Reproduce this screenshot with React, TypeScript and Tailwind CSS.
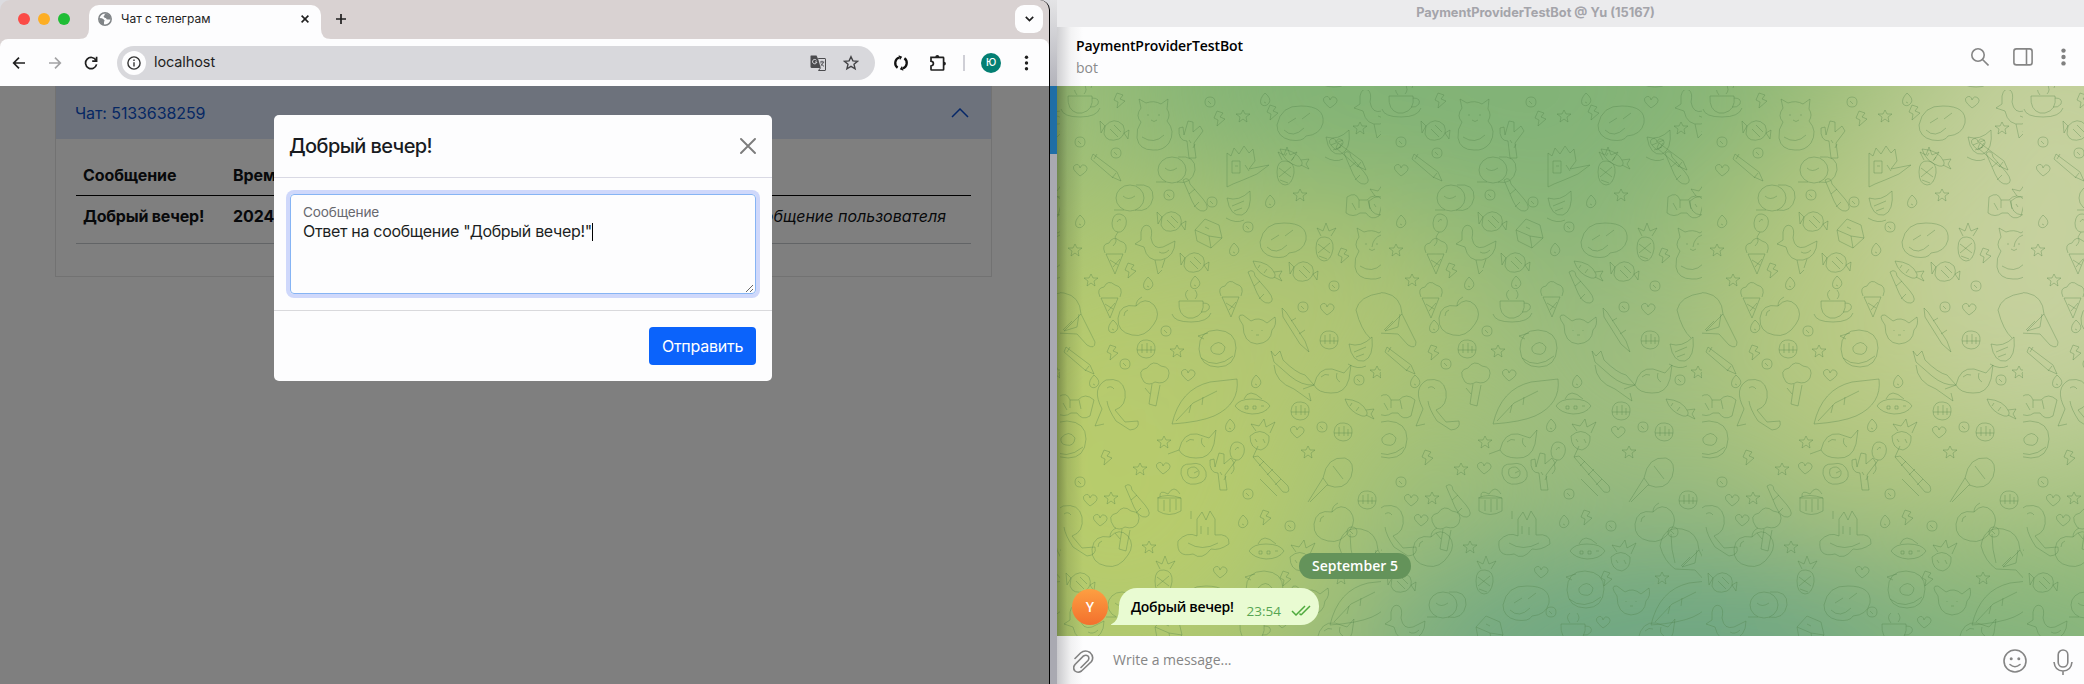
import React from "react";

/* ---------- wallpaper doodles ---------- */

const SHAPES: Record<string, string> = {
  cat: "M-13-12l-2-9 7 4q8-3 15 1l7-5-1 10q4 6 0 12q9 10 2 22q-6 8-16 7q-14 0-16-12q-1-9 4-16q-6-6 0-14M-6-6v2M5-6v2M-3 0q3 3 6 0M-12 17q12 8 22-2",
  castle: "M-14 24v-34l4 3 3-8 5 6 5-8 5 7 4-4 2 12-6 8 20-4-12 9-14 6-10 4zM-9-2v12h8v-12zM-6 3h3M4 2l4 6",
  planet: "M-14 0a14 13 0 1 0 28 0a14 13 0 1 0-28 0M6-13q18-2 17 13q-3 15-18 12M-7-2q5 5 12 0M-16 12h10",
  pencil: "M-14-13l24 18 4 9-9-4-21-18zM-10-13l-3 5M9 6l-4 5",
  melon: "M-11-8q12 4 23-7q2 20-8 24q-12 2-15-17M-6 0l12-5M-4 5l8-3M-12 12q10 6 18 2",
  cube: "M-13-2l10-11 14 6 3 13-11 10-14-7zM-13-2l14 6 13 2M1 4l2 12M-3-5l4 2",
  whale: "M-23 3q4-20 24-19q24 0 22 17q-3 12-17 13q-3 6-16 4q-13-3-13-15M-12 1l8-5M2-3l8-6M-16 8q9 9 20-2",
  pine: "M-8 4q0-12 9-11q9 1 8 12q-2 12-9 12q-8-1-8-13M-3-8l-4-8 6 3 3-8 3 8 7-3-5 8M-6 0l12 9M6-1l-12 10M-5 12l8 3",
  duck: "M-16-14q2-9 8-6q4 3 2 12q2 12 12 9l12-6q0 16-14 19q-14 2-17-13l-9-3 6-4zM2 6q5 3 10-2M-2 14l3 14 4-4M8 13l-3 9",
  candy: "M-9-4q9-10 18-1q4 9-4 14q-12 4-15-5zM-9-4l-5-5 1 12zM10 3l5-3-1 9zM-4-1l8 8M0-5l7 7",
  carrot: "M-13-9q17 1 22 13q1 5-5 4q-13-4-17-17M8 2l8-1-3 5 3 5-8-4M-6-5l-2 3M1-1l-3 4",
  apple: "M0-10q9-10 18-1q7 9 0 19q-9 14-22 11q-15-3-14-17q2-15 18-12M0-10q0-6 6-9M-12 0q0-5 4-6",
  cup: "M-12-6h24q2 14-10 17h-5q-10-3-9-17M12-4q8 0 6 6q-3 4-8 3M-19 7q2 8 19 8q17 0 20-9M-3-7q-5-6 0-10M4-8q4-4 0-9",
  cone: "M-9-2l9 20 8-20zM-10-3q-4-9 4-10q4-8 11-2q9 2 5 12M-5 4l8 5M5 3l-7 8",
  rabbit: "M-14-2q-8-11 0-10l8 6q8-5 16 2l8-6q2 8-3 13q-1 13-15 14q-14-1-14-19M-5 3v1M5 3v1M-1 8h3",
  beam: "M-16-22l4 4 19 29 4 11-9-8-17-27zM-7-9l5-3M1 4l6-4",
  umbrella: "M-23-6q3-20 22-17q16 3 17 21l14 28q0 8-8 3l-10-11-20-1q-11-8-15-23M-12-18q0 16 4 29M16-2l-17 17 13-4 2-13M-2 14l9-9",
  donut: "M-19 0q0-19 18-19q19 1 19 18q-1 19-18 19q-18 0-19-18M-7-2q8-9 14 0q-1 9-9 7q-6-1-5-7M-14-10l-6-3 10-3M-17 9q15 12 32-2",
  banana: "M-22-22l4 5 5-5 3 9q13 13 22 15l9 10q-12 1-24-9l-16-14zM-19-8q1 17 20 24l17 12-2-8",
  fish: "M-16 8q4-18 18-16l12 4 7-8-2 14q-4 15-18 14q-13 0-17-8M-16 8l-11 4M7-4q-2 6 3 9M-9 0q4-4 8-2",
  toucan: "M-18 24l7-17q-11-21 4-29q16-3 19 11q2 15-10 19l10 12 13-1q2 8-8 9l-14-9q-8-12-9-20M-6-14q4-3 7 1M-18 24l9-2",
  leaf: "M-33 23q8-35 38-42l27-3q3 25-23 37q-14 6-42 8M-29 20l17-18 24-12M-14 4l-2 8M-2-4l-1 8",
  tree: "M-10 2q-8-12 3-14q6-9 14-2q11 1 7 12q-4 7-13 4q-6 4-11 0M-2 4l-3 20 7 2 4-21M-9 8l5 6",
  ball: "M-9 0q1-10 10-9q9 1 8 10q-1 8-9 8q-9-1-9-9M-4-5v9M1-6v10M5-3v7M-9 1h18",
  bow: "M-17-8q9-6 12 3h8q7-8 16 0l-4 16q-8 5-13-3h-6q-7 5-14 0zM-5-5v8M4-5l2 9M-12-2l4 7",
  berry: "M-10-1q10-9 19 0q1 11-8 14q-11-1-11-14M-4-6l-5-7 8 2 5-7 2 8 9-5-5 11M-5 2l2 3M3 2l2 4",
  pumpkin: "M-13 1q-1-11 10-10q11-3 15 8q2 10-10 12q-12 2-15-10M-6-4q7-5 11 2q1 7-6 7q-7 0-5-9M0 0l4-2",
  balloon: "M-7-3q1-10 8-9q8 2 6 11q-3 8-8 7q-6-1-6-9M-1 6l-3 5q3 4-2 9M-2-4q2-4 4-2",
  cactus: "M-3 20l-2-17q-9 0-8-13l4-1 1 8 4-14 5 1 0 10 7-6 3 5-9 12 2 15zM-3 2l2 3M3 6l-2 4",
  rail: "M-19-20l30 35q8 2 5-6l-30-30zM-19-20l5-11M-13-11l5-5M-5-2l6-6M3 8l6-6M-12 2l17 17",
  racket: "M-27 26l15-24q4-22 22-20q11 4 6 19q-7 15-24 8l-17 17M-12 2l5 7M-2-10l10 13",
  gift: "M-11-2h23v13q-12 7-23 0zM-9-3q-1-8 8-3q6-10 12 0M-5 0v11M1-1v13M7-1v11M-12-2q10-5 24 0",
  bottle: "M-12-17q6-4 7 4l13 15q8 10 1 12q-7 1-12-10zM-6-3l6-5M4 5l-5 5",
  cake: "M-25 6q9-10 19-5v-17l5-7 4 8 4-9 5 8v16q15-2 14 9q-10 7-18 5q-9 12-18 5q-17 4-15-13M-12-16v-8M-2-9v8M5-8v8M-15 8q14 9 30 0",
  ufo: "M-18 2q4-7 17-7q14 0 18 7q-5 8-18 8q-12-1-17-8M-9-5q5-12 18 0M-8 2h3v3h-3zM0 2h3v3h-3zM8 2h3",
  heart: "M0 6q-10-8-5-11q4-2 5 3q2-5 6-2q4 4-6 10",
  ring: "M-5 0q0-5 5-5q5 0 5 5q0 5-5 5q-5 0-5-5M-2-1l3 3",
  star: "M0-6l2 4 5 0-4 3 1 5-4-3-4 3 1-5-4-3 5 0z",
  bolt: "M-3-7l6 2-3 4 5 2-8 7 1-6-4-2z",
  drop: "M0-7q7 6 4 10q-4 5-8 1q-2-5 4-11M-1 2l2 1",
};

const DOODLES: [string, number, number][] = [
  ["cat", 94, 30], ["castle", 181, 73], ["whale", 240, 32], ["duck", 316, 20], ["planet", 112, 80],
  ["pencil", 47, 77], ["planet", 70, 108], ["melon", 178, 116], ["cube", 148, 142], ["whale", 223, 149],
  ["pine", 264, 154], ["duck", 97, 156], ["candy", 134, 172], ["carrot", 206, 180], ["candy", 243, 181],
  ["cat", 312, 159], ["cone", 50, 210], ["apple", 76, 226], ["cup", 131, 217], ["cone", 171, 209],
  ["rabbit", 197, 237], ["beam", 238, 240], ["umbrella", 5, 226], ["donut", 158, 259], ["banana", 233, 283],
  ["fish", 270, 287], ["toucan", 53, 312], ["leaf", 145, 311], ["tree", 94, 290], ["ufo", 193, 314],
  ["ball", 240, 321], ["bow", 15, 315], ["carrot", 298, 318], ["berry", 200, 347], ["donut", 8, 350],
  ["pumpkin", 134, 383], ["balloon", 177, 364], ["cactus", 163, 380], ["rail", 212, 387], ["racket", 275, 386],
  ["gift", 109, 410], ["bottle", 77, 413], ["cake", 143, 445], ["apple", 272, 432], ["toucan", 10, 438],
  ["ufo", 207, 459], ["apple", 50, 457], ["tree", 64, 435], ["ball", 86, 259], ["ball", 307, 410],
  ["candy", 54, 40], ["melon", 277, 55], ["carrot", 233, 68], ["pine", 225, 78], ["bottle", 135, 107],
  ["berry", 319, 112], ["balloon", 59, 136], ["candy", 111, 131], ["drop", 174, 160], ["cone", 55, 166],
  ["fish", 135, 352], ["star", 104, 352], ["ball", 283, 342], ["bottle", 296, 80], ["bow", 304, 115],
  ["pencil", 292, 66], ["cactus", 132, 48], ["star", 183, 26], ["bolt", 213, 22], ["ring", 56, 63],
  ["cup", 192, 540], ["planet", 62, 515], ["rabbit", 250, 508], ["whale", 145, 512], ["leaf", 303, 512],
  ["candy", 20, 492], ["donut", 205, 500], ["pine", 103, 487], ["duck", 26, 536], ["fish", 273, 541],
  ["berry", 240, 468], ["umbrella", 302, 462], ["cube", 108, 539], ["cup", 20, 12], ["heart", 276, 54],
  ["ring", 109, 105], ["ring", 188, 137], ["ring", 152, 112], ["drop", 88, 194], ["drop", 135, 193],
  ["star", 31, 190], ["ring", 274, 196], ["ring", 243, 217], ["heart", 267, 219], ["bolt", 71, 180],
  ["bolt", 284, 165], ["drop", 53, 237], ["ring", 106, 241], ["ball", 269, 250], ["star", 117, 261],
  ["bolt", 53, 262], ["ring", 65, 274], ["heart", 128, 285], ["ring", 299, 290], ["star", 317, 282],
  ["drop", 196, 292], ["ring", 262, 337], ["heart", 237, 342], ["drop", 170, 336], ["bolt", 47, 367],
  ["star", 80, 379], ["heart", 103, 378], ["ring", 188, 404], ["star", 51, 408], ["bolt", 206, 427],
  ["heart", 40, 430], ["ring", 230, 436], ["drop", 183, 432], ["ring", 292, 442], ["star", 89, 457],
  ["heart", 160, 482], ["bolt", 226, 488], ["star", 281, 488], ["ring", 170, 522], ["heart", 222, 532],
  ["drop", 20, 132], ["star", 15, 160], ["heart", 20, 80], ["ring", 20, 52], ["bolt", 160, 28],
  ["heart", 270, 12], ["star", 300, 38], ["ring", 150, 12], ["drop", 205, 10], ["bolt", 60, 10],
  ["star", 240, 105], ["drop", 210, 112], ["ring", 20, 392], ["heart", 30, 410], ["star", 248, 362],
  ["pencil", 20, 270], ["bottle", 200, 199], ["melon", 300, 262], ["drop", 34, 292],
];

function Wallpaper() {
  return (
    <svg className="block h-full w-full" width="1027" height="550" viewBox="0 0 1027 550">
      <defs>
        <filter id="soft" x="-50%" y="-50%" width="200%" height="200%">
          <feGaussianBlur stdDeviation="75" />
        </filter>
        <linearGradient id="edge" x1="0" x2="1" y1="0" y2="0">
          <stop offset="0" stopColor="#2c3a1a" stopOpacity=".42" />
          <stop offset=".4" stopColor="#2c3a1a" stopOpacity=".14" />
          <stop offset="1" stopColor="#2c3a1a" stopOpacity="0" />
        </linearGradient>
        <pattern id="doodles" x="3" y="4" width="321" height="560" patternUnits="userSpaceOnUse">
          <g fill="none" stroke="#4c7d46" strokeWidth="1" strokeOpacity=".34">
            {DOODLES.map(([name, x, y], i) => (
              <path key={i} d={SHAPES[name]} transform={`translate(${x} ${y})`} />
            ))}
            <path d="M321 203q-22 3-25 17q5 20 14 28M-3 310l-14 0M321 145q-8 3-9 12" />
          </g>
        </pattern>
      </defs>
      <rect width="1027" height="550" fill="#9fbf79" />
      <g filter="url(#soft)">
        <ellipse cx="400" cy="-20" rx="360" ry="140" fill="#7fb276" />
        <ellipse cx="60" cy="370" rx="210" ry="240" fill="#b8cc6c" />
        <ellipse cx="230" cy="230" rx="180" ry="110" fill="#b2c673" />
        <ellipse cx="500" cy="60" rx="110" ry="140" fill="#83b378" />
        <ellipse cx="560" cy="290" rx="130" ry="110" fill="#9cbc80" />
        <ellipse cx="810" cy="240" rx="140" ry="200" fill="#b8c980" />
        <ellipse cx="1010" cy="130" rx="170" ry="260" fill="#c6d19f" />
        <ellipse cx="620" cy="570" rx="330" ry="115" fill="#6ba484" />
        <ellipse cx="980" cy="580" rx="190" ry="90" fill="#7db07e" />
      </g>
      <rect width="1027" height="550" fill="url(#doodles)" />
      <rect width="26" height="550" fill="url(#edge)" />
    </svg>
  );
}

/* ---------- browser ---------- */

function Toolbar() {
  return (
    <div className="flex h-[47px] items-center rounded-t-lg bg-[#fdfdfe]">
      <svg className="ml-3 h-[14px] w-[14px]" viewBox="0 0 14 14" fill="none" stroke="#1f1f1f" strokeWidth="1.7">
        <path d="M13 7H2M7 1.7L1.7 7 7 12.3" />
      </svg>
      <svg className="ml-[22px] h-[14px] w-[14px]" viewBox="0 0 14 14" fill="none" stroke="#a3a3a5" strokeWidth="1.7">
        <path d="M1 7h11M7 1.7L12.3 7 7 12.3" />
      </svg>
      <svg className="ml-[22px] h-[14px] w-[14px]" viewBox="0 0 14 14" fill="none" stroke="#1f1f1f" strokeWidth="1.7">
        <path d="M12 4.2A5.6 5.6 0 1 0 12.6 8.4M12.6.8v4.4H8.2" />
      </svg>
      <div className="ml-[19px] flex h-[34px] w-[758px] items-center rounded-full bg-[#d8d8dc] pl-[5px]">
        <div className="flex h-6 w-6 items-center justify-center rounded-full bg-[#fdfdfe]">
          <svg className="h-[14px] w-[14px]" viewBox="0 0 14 14" fill="none" stroke="#333" strokeWidth="1.4">
            <circle cx="7" cy="7" r="6.1" />
            <path d="M7 6.2V10.4M7 3.6v1.5" />
          </svg>
        </div>
        <span className="ml-[8px] text-[14.5px] leading-none tracking-[-0.1px] text-[#1f1f1f]">localhost</span>
        <svg className="ml-auto h-4 w-4" viewBox="0 0 16 16">
          <path d="M1 .5h5.5l2 4.5 2.2 8H1.8Q.5 13 .5 11.500V1.500Q.5.500 1 .500z" fill="#4b4b4e" />
          <path d="M8.200 3.500H15q.5 0 .5.6V15q0 .5-.5.5H8.500l2-2.600" fill="none" stroke="#4b4b4e" />
          <path d="M6.500 5.300a2.200 2.200 0 1 0 .4 1.700H5" fill="none" stroke="#d8d8dc" />
          <path d="M10 7h4.200M12 5.800V7M13.500 7q-.7 2.500-3 4M11 8.500q1 1.800 3 2.800" fill="none" stroke="#4b4b4e" strokeWidth=".9" />
        </svg>
        <svg className="ml-[17px] mr-[16px] h-4 w-4" viewBox="0 0 16 16" fill="none" stroke="#434346" strokeWidth="1.4">
          <path d="M8 1.700l1.900 4.200 4.600.4-3.500 3 1.100 4.500L8 11.400l-4.100 2.400L5 9.300l-3.500-3 4.600-.4z" />
        </svg>
      </div>
      <svg className="ml-[18px] h-4 w-4" viewBox="0 0 16 16" fill="none" stroke="#111" strokeWidth="2.300">
        <path d="M6.300 2.500A5.800 5.800 0 0 0 4.600 12.700M9.700 13.500A5.800 5.800 0 0 0 11.400 3.300" />
        <path d="M5.600.2L9.200 1.800 7 5zM10.400 15.800L6.800 14.200 9 11z" fill="#111" stroke="none" />
      </svg>
      <svg className="ml-[20px] h-[18px] w-[18px]" viewBox="0 0 18 18" fill="none" stroke="#1f1f1f" strokeWidth="1.700">
        <path d="M2 3.300h12q.6 0 .6.600v11.500q0 .6-.6.600H2.600q-.6 0-.6-.6V12q2.400-.4 2.400-2.400T2 7.200z" />
        <path d="M6.300 3a2 2 0 0 1 4 0zM15 7.700a1.900 1.900 0 0 1 0 3.800z" fill="#1f1f1f" stroke="none" />
      </svg>
      <div className="ml-[16px] h-4 w-[2px] bg-[#cfcfd6]" />
      <div className="ml-[16px] flex h-5 w-5 items-center justify-center rounded-full bg-[#047f73] text-[10px] font-medium text-white">
        Ю
      </div>
      <svg className="ml-[23px] h-4 w-[5px]" viewBox="0 0 5 16" fill="#1f1f1f">
        <circle cx="2.500" cy="2.300" r="1.700" />
        <circle cx="2.500" cy="8" r="1.700" />
        <circle cx="2.500" cy="13.700" r="1.700" />
      </svg>
    </div>
  );
}

function TabStrip() {
  return (
    <div className="flex h-[39px] items-start pt-[5px]">
      <div className="ml-[18px] mt-2 flex gap-2">
        <div className="h-3 w-3 rounded-full bg-[#fb4b47]" />
        <div className="h-3 w-3 rounded-full bg-[#fdae24]" />
        <div className="h-3 w-3 rounded-full bg-[#1fbd35]" />
      </div>
      <div className="relative ml-[19px] flex h-[34px] w-[232px] items-center rounded-t-[10px] bg-[#fdfdfe] pb-[6px]">
        <svg className="absolute bottom-0 -left-[10px] h-[10px] w-[10px]" viewBox="0 0 10 10">
          <path d="M10 0v10H0Q10 10 10 0" fill="#fdfdfe" />
        </svg>
        <svg className="absolute -right-[10px] bottom-0 h-[10px] w-[10px]" viewBox="0 0 10 10">
          <path d="M0 0v10h10Q0 10 0 0" fill="#fdfdfe" />
        </svg>
        <svg className="ml-[9px] h-[14px] w-[14px]" viewBox="0 0 14 14">
          <circle cx="7" cy="7" r="6.200" fill="none" stroke="#808487" strokeWidth="1.500" />
          <path d="M6.500 1.200q1 2-.8 2.800-.4 1.300 1 1.700 2 .1 1.800 1.500 1.600.5 4.300.2Q13 2 6.500 1.200M1 6q3.500 0 4.500 1.300Q7.500 8.600 6 10v2.900Q1.400 12 1 6" fill="#808487" />
        </svg>
        <span className="ml-[9px] text-[12px] leading-none text-[#1f1f1f]">Чат с телеграм</span>
        <svg className="ml-auto mr-[12px] h-2 w-2" viewBox="0 0 8 8" stroke="#1f1f1f" strokeWidth="1.600">
          <path d="M.6.6l6.800 6.800M7.400.6L.6 7.400" />
        </svg>
      </div>
      <svg className="ml-[15px] mt-[9px] h-[10px] w-[10px]" viewBox="0 0 10 10" stroke="#1f1f1f" strokeWidth="1.700">
        <path d="M5 0v10M0 5h10" />
      </svg>
      <div className="ml-auto mr-[6px] flex h-7 w-7 items-center justify-center rounded-[9px] bg-[#fdfdfe]">
        <svg className="h-[6px] w-[9px]" viewBox="0 0 9 6" fill="none" stroke="#1f1f1f" strokeWidth="1.700">
          <path d="M.8.8l3.700 3.700L8.200.8" />
        </svg>
      </div>
    </div>
  );
}

function ChatPage() {
  return (
    <div className="ml-[55px] h-full w-[937px]">
      <div className="h-[191px] border-x border-b border-[#e4e4e4]">
        <div className="flex h-[53px] items-center justify-between bg-[#dae4f8] pr-5 pl-[19px] text-[16px] tracking-[-0.1px] text-[#0c50c8]">
          <span>Чат: 5133638259</span>
          <svg className="mr-[2px] h-[10px] w-[18px]" viewBox="0 0 18 10" fill="none" stroke="#0b4fd0" strokeWidth="1.500">
            <path d="M1 9l8-8 8 8" />
          </svg>
        </div>
        <div className="mx-5 mt-[16px] text-[16px] leading-6 tracking-[-0.1px] text-[#101316]">
          <div className="flex h-[41px] items-center border-b border-black px-[7px] font-bold">
            <span className="w-[150px]">Сообщение</span>
            <span>Время</span>
          </div>
          <div className="flex h-[48px] border-b border-[#c4c8cc] px-[7px] pt-[8px]">
            <span className="w-[150px] whitespace-nowrap font-bold tracking-[-0.2px]">Добрый вечер!</span>
            <span className="font-bold">2024-09-05</span>
            <span className="ml-auto mr-[18px] italic tracking-[0px]">Сообщение пользователя</span>
          </div>
        </div>
      </div>
    </div>
  );
}

function Modal() {
  return (
    <div className="mt-[29px] flex h-[266px] w-[498px] flex-col rounded-[5px] bg-[#fdfdfe]">
      <div className="flex h-[63px] items-center justify-between border-b border-[#d9d9e4] pr-4 pl-[15px]">
        <h5 className="text-[20px] font-medium leading-none tracking-[-0.6px] text-[#181b1f]">Добрый вечер!</h5>
        <svg className="h-4 w-4" viewBox="0 0 16 16" stroke="#7c7c7c" strokeWidth="1.900" strokeLinecap="round">
          <path d="M1 1l14 14M15 1L1 15" />
        </svg>
      </div>
      <div className="flex-1 p-4">
        <div className="relative h-[100px] rounded-[4px] border border-[#86b4f4] px-3 pt-[8px] text-[#1c1f23] shadow-[0_0_0_4px_#cfd8fb]">
          <div className="text-[13.600px] leading-[18px] tracking-[-0.15px] text-[#68696f]">Сообщение</div>
          <div className="flex items-center text-[16px] leading-[21px] tracking-[-0.32px]">
            <span>Ответ на сообщение "Добрый вечер!"</span>
            <span className="h-[18px] w-px bg-black" />
          </div>
          <svg className="absolute right-[2px] bottom-[1px] h-[7px] w-[7px]" viewBox="0 0 7 7" stroke="#555" strokeWidth=".9">
            <path d="M0 7l7-7M4 7l3-3" />
          </svg>
        </div>
      </div>
      <div className="flex h-[71px] items-center justify-end border-t border-[#d9d9dc] px-4">
        <div className="flex h-[38px] w-[107px] items-center justify-center rounded-[4px] bg-[#0b63fb] text-[16px] tracking-[-0.25px] text-white">
          Отправить
        </div>
      </div>
    </div>
  );
}

function Browser() {
  return (
    <div className="flex h-full w-[1050px] flex-col overflow-hidden rounded-t-[10px] border-r border-black bg-[#d9d2d2]">
      <TabStrip />
      <Toolbar />
      <div className="relative flex-1 bg-white">
        <ChatPage />
        <div className="absolute inset-0 flex justify-center bg-black/50 pr-[3px]">
          <Modal />
        </div>
      </div>
    </div>
  );
}

/* ---------- messenger ---------- */

function Messenger() {
  return (
    <div className="flex h-full w-[1027px] flex-col font-['Open_Sans',sans-serif]">
      <div className="flex h-[27px] items-center justify-center bg-[#ebebed] pr-[70px] font-['Inter',sans-serif] text-[12.800px] font-bold leading-none text-[#a4a4aa]">
        PaymentProviderTestBot @ Yu (15167)
      </div>
      <div className="flex h-[59px] items-center bg-[linear-gradient(90deg,#cfcfd2_0,#f3f3f4_14px,#fdfdfe_26px)] pl-[19px]">
        <div className="flex flex-col pt-px">
          <span className="text-[14px] font-semibold leading-[22px] tracking-[-0.1px] text-black">PaymentProviderTestBot</span>
          <span className="text-[14px] leading-[22px] text-[#8a8a8c]">bot</span>
        </div>
        <svg className="ml-auto h-[18px] w-[18px]" viewBox="0 0 18 18" fill="none" stroke="#858585" strokeWidth="1.600">
          <circle cx="7" cy="7" r="6.200" />
          <path d="M11.500 11.500l6 6" />
        </svg>
        <svg className="ml-[24px] h-[18px] w-5" viewBox="0 0 20 18" fill="none" stroke="#858585" strokeWidth="1.600">
          <rect x=".9" y=".9" width="18.200" height="16" rx="2.500" />
          <path d="M13.500 1v16" />
        </svg>
        <svg className="ml-[28px] mr-[18px] h-[18px] w-[5px]" viewBox="0 0 5 18" fill="#808080">
          <circle cx="2.500" cy="2.600" r="2.200" />
          <circle cx="2.500" cy="9" r="2.200" />
          <circle cx="2.500" cy="15.400" r="2.200" />
        </svg>
      </div>
      <div className="relative h-[550px]">
        <Wallpaper />
        <div className="absolute inset-x-0 bottom-0 flex flex-col pb-[11px]">
          <div className="ml-[242px] flex h-[26px] w-[112px] items-center justify-center rounded-full bg-[#64935a] text-[14px] font-semibold leading-none text-white">
            September 5
          </div>
          <div className="mt-[9px] flex items-center pl-[15px]">
            <div className="flex h-9 w-9 items-center justify-center rounded-full bg-[linear-gradient(#fd9f42,#f3702d)] text-[14px] font-semibold text-white">
              Y
            </div>
            <svg className="ml-[3px] h-[37px] w-3" viewBox="0 0 12 37">
              <path d="M8 17V20Q8 33 0 36.500V37H12V17z" fill="#e9fbd2" />
            </svg>
            <div className="-ml-[4px] flex h-[37px] w-[200px] items-center rounded-[18px] rounded-bl-none bg-[#e9fbd2] pl-3">
              <span className="text-[14px] font-semibold tracking-[-0.3px] text-black">Добрый вечер!</span>
              <span className="ml-auto mr-[10px] pt-[11px] text-[13.500px] leading-none text-[#57a553]">23:54</span>
              <svg className="mr-[8px] mt-[7px] h-[11px] w-5" viewBox="0 0 20 11" fill="none" stroke="#4eaa3d" strokeWidth="1.500">
                <path d="M1 6l4 4 9-9M10 10l9-9M8.500 8.500L10 10" />
              </svg>
            </div>
          </div>
        </div>
      </div>
      <div className="flex h-12 items-center bg-[linear-gradient(90deg,#c9c9cc_0,#f1f1f2_14px,#fdfdfe_26px)] pl-[16px]">
        <svg className="mt-[4px] h-6 w-[21px]" viewBox="0 0 21 24" fill="none" stroke="#828282" strokeWidth="1.600" strokeLinecap="round">
          <path d="M2 8.500L7.500 3Q12-.7 17 2.500q4.500 4 1.500 9L8.500 21q-3.500 2.500-6.500 0-2.700-3 0-6.500L10.500 6q2.500-1.600 4.500 0 1.700 2.200 0 4.500L8 17.500" />
        </svg>
        <span className="ml-[19px] pb-[2px] text-[14px] text-[#858585]">Write a message...</span>
        <svg className="ml-auto mt-[2px] h-6 w-6" viewBox="0 0 24 24" fill="none" stroke="#858585" strokeWidth="1.600">
          <circle cx="12" cy="12" r="11" />
          <path d="M7 15.500q5 4.500 10 0" strokeLinecap="round" />
          <circle cx="8.200" cy="9.700" r="1.500" fill="#858585" stroke="none" />
          <circle cx="15.800" cy="9.700" r="1.500" fill="#858585" stroke="none" />
        </svg>
        <svg className="ml-[26px] mr-[11px] mt-[4px] h-[26px] w-5" viewBox="0 0 20 26" fill="none" stroke="#858585" strokeWidth="1.600">
          <rect x="5.200" y="1" width="9.600" height="17" rx="4.800" />
          <path d="M1 13q1 9 9 9t9-9M10 22v4" />
        </svg>
      </div>
    </div>
  );
}

export default function App() {
  return (
    <div className="flex h-[684px] w-[2084px] overflow-hidden bg-[#dcdce0] font-['Inter',sans-serif]">
      <Browser />
      <div className="flex w-[7px] flex-col">
        <div className="h-[86px] bg-[linear-gradient(#e4e4e6,#b3b3bb)]" />
        <div className="h-[68px] bg-[#1f6ea6]" />
        <div className="flex-1 bg-[#a9a9b1]" />
      </div>
      <Messenger />
    </div>
  );
}
